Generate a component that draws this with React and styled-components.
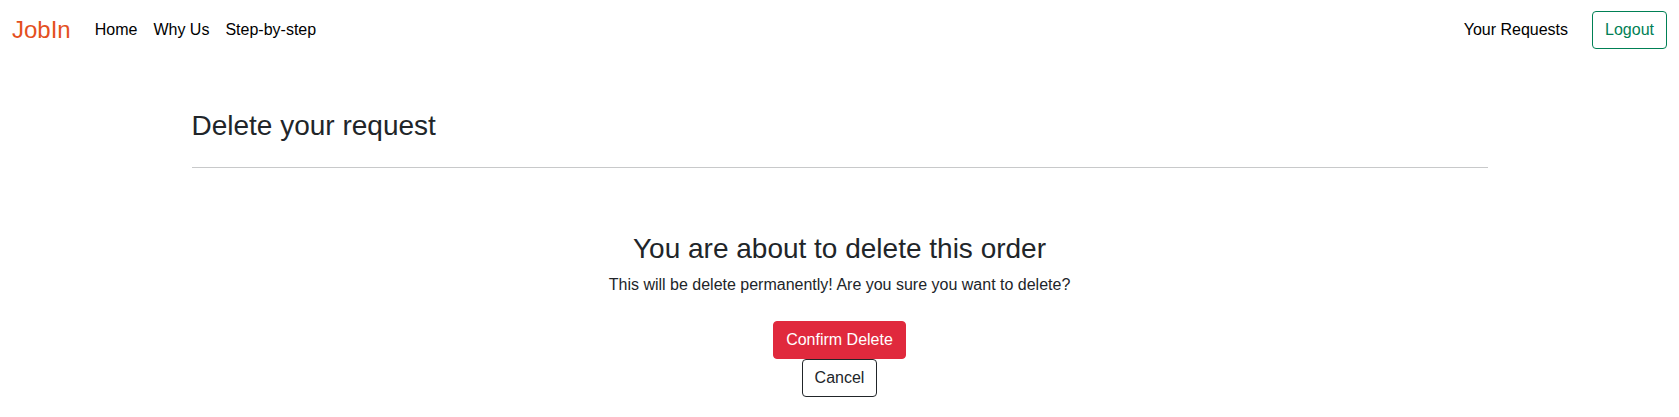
import React from 'react';
import styled, { createGlobalStyle } from 'styled-components';

const GlobalStyle = createGlobalStyle`
  *, *::before, *::after { box-sizing: border-box; }
  body {
    margin: 0;
    background: #fff;
    color: #212529;
    font-family: "Helvetica Neue", "Liberation Sans", Arial, sans-serif;
    font-size: 16px;
    line-height: 24px;
  }
`;

const Navbar = styled.nav`
  display: flex;
  align-items: center;
  padding: 10px 12px;
`;

const Brand = styled.a`
  margin-right: 16px;
  color: #e4501e;
  font-size: 24px;
  line-height: 36px;
  text-decoration: none;
`;

const NavList = styled.ul`
  display: flex;
  align-items: center;
  margin: 0;
  padding: 0;
  list-style: none;
`;

const NavLink = styled.a`
  display: block;
  padding: 8px;
  color: #000;
  text-decoration: none;
`;

const Account = styled.div`
  display: flex;
  align-items: center;
  gap: 16px;
  margin-left: auto;
`;

const variants = {
  success: { color: '#008055', border: '#008055', background: '#fff' },
  danger: { color: '#fff', border: '#e0293d', background: '#e0293d' },
  dark: { color: '#212529', border: '#212529', background: '#fff' },
};

const Button = styled.button`
  padding: 6px 12px;
  border: 1px solid ${({ $variant }) => variants[$variant].border};
  border-radius: 4px;
  background: ${({ $variant }) => variants[$variant].background};
  color: ${({ $variant }) => variants[$variant].color};
  font: inherit;
  cursor: pointer;
`;

const Container = styled.main`
  max-width: 1320px;
  margin: 49px auto 0;
  padding: 0 12px;
`;

const Title = styled.h1`
  margin: 0;
  font-size: 28px;
  font-weight: 400;
  line-height: 34px;
`;

const Divider = styled.hr`
  height: 1px;
  margin: 24px 0 64px;
  border: 0;
  background: #c8c9ca;
`;

const Confirmation = styled.section`
  display: flex;
  flex-direction: column;
  align-items: center;
  text-align: center;
`;

const Message = styled.p`
  margin: 7px 0 24px;
`;

export default function App() {
  return (
    <>
      <GlobalStyle />
      <Navbar>
        <Brand href="#">JobIn</Brand>
        <NavList>
          <li><NavLink href="#">Home</NavLink></li>
          <li><NavLink href="#why-us">Why Us</NavLink></li>
          <li><NavLink href="#steps">Step-by-step</NavLink></li>
        </NavList>
        <Account>
          <NavLink href="#requests">Your Requests</NavLink>
          <Button type="button" $variant="success">Logout</Button>
        </Account>
      </Navbar>
      <Container>
        <Title>Delete your request</Title>
        <Divider />
        <Confirmation>
          <Title as="h2">You are about to delete this order</Title>
          <Message>This will be delete permanently! Are you sure you want to delete?</Message>
          <Button type="button" $variant="danger">Confirm Delete</Button>
          <Button type="button" $variant="dark">Cancel</Button>
        </Confirmation>
      </Container>
    </>
  );
}
